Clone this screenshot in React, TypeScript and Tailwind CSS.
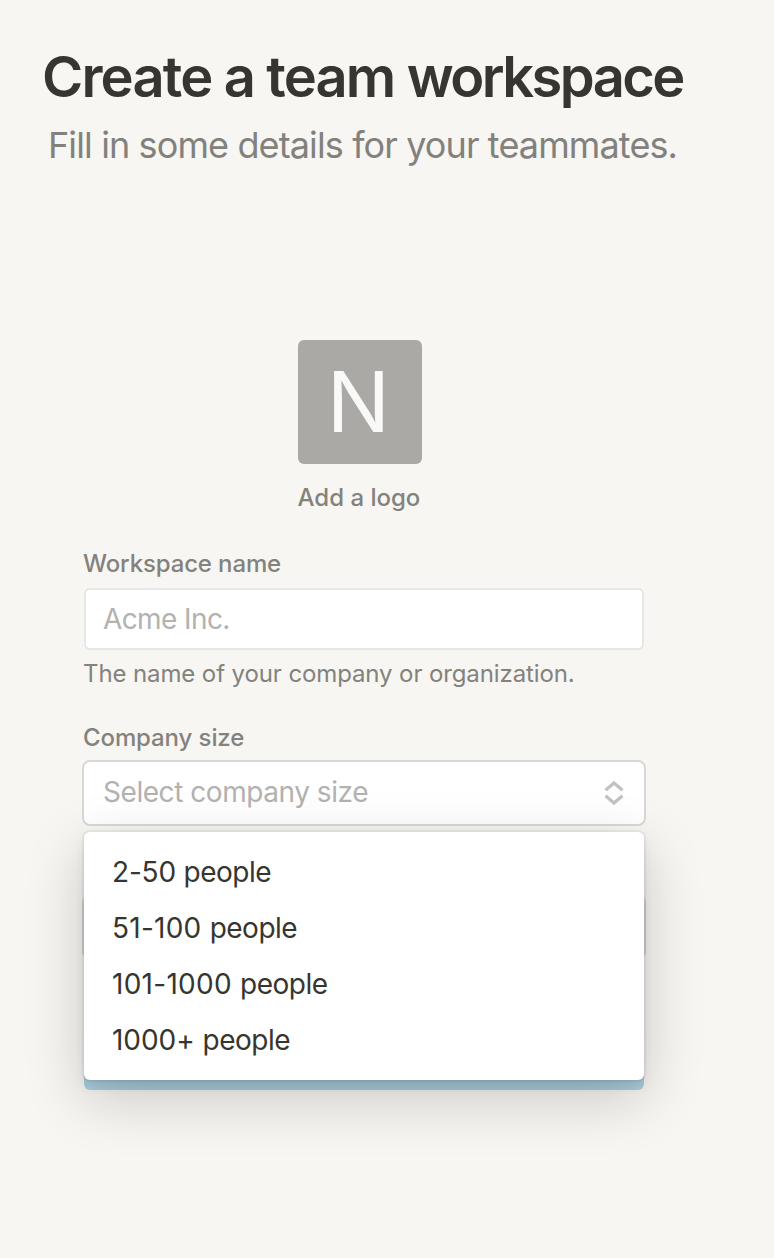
const sizes = [
  { count: "2-50", cls: "tracking-[-0.2px]" },
  { count: "51-100", cls: "tracking-[0.25px]" },
  { count: "101-1000", cls: "tracking-[0.27px]" },
  { count: "1000+", cls: "tracking-[-0.05px]" },
];

export default function App() {
  return (
    <main className="h-[1258px] w-[774px] overflow-hidden bg-[#f7f6f2] font-['Inter',sans-serif] text-[#37352f]">
      <header className="w-[726px] pt-[44px] whitespace-nowrap">
        <h1 className="ml-[42px] h-[66px] text-[56px] leading-[66px] font-semibold tracking-[-1.83px]">
          Create a team <span className="tracking-[-2.6px]">workspace</span>
        </h1>
        <p className="mt-[11px] ml-[48px] h-[49px] text-[36px] leading-[48px] tracking-[-0.88px] text-[#82817d]">Fill in some details for your teammates.</p>
      </header>
      <section className="mt-[170px] ml-[84px] flex w-[560px] flex-col whitespace-nowrap text-[#83827d]">
        <div className="ml-[214px] flex size-[124px] items-center justify-center rounded-[6px] bg-[#aaa9a5] pr-[3px] text-[84px] leading-none text-[#f9f9f8]">N</div>
        <div className="mt-[18px] ml-[213.5px] h-8 text-[24px] leading-8 font-medium">Add a logo</div>
        <label className="mt-[34px] -ml-px h-8 text-[24px] leading-8 font-medium tracking-[-0.13px]">Workspace name</label>
        <div className="mt-[8px] flex h-[62px] items-center rounded-[6px] border-2 border-[#e7e7e6] bg-white px-[17px] pb-px text-[28px] tracking-[-0.6px] text-[#b2b2b0]">Acme Inc.</div>
        <p className="mt-[8px] -ml-px h-8 text-[24px] leading-8 tracking-[-0.11px]">The name of your company or organization.</p>
        <label className="mt-[32px] -ml-px h-8 text-[24px] leading-8 font-medium tracking-[-0.1px]">Company size</label>
        <div className="relative mt-[6px] -ml-[2px] flex h-[66px] w-[564px] items-center justify-between rounded-[8px] border-2 border-[#d8d8d5] bg-white px-[19px] text-[28px] text-[#b2b2b0]">
          <span className="pb-[2px] tracking-[-0.45px]">Select company size</span>
          <svg className="mr-px h-[24px] w-[20px]" viewBox="0 0 20 24" fill="none" stroke="#c3c2c0" strokeWidth="3.3">
            <path d="M1.5 9.2 10 2l8.5 7.2M1.5 14.8 10 22l8.5-7.2" />
          </svg>
          <ul className="absolute top-[70px] left-0 h-[248px] w-[560px] rounded-[6px] bg-white pt-[12px] text-[#37352f] shadow-[0_0_0_2px_rgba(15,15,15,0.05),0_6px_12px_rgba(15,15,15,0.08),0_18px_60px_rgba(15,15,15,0.2)]">
            {sizes.map((s) => (
              <li key={s.count} className="h-14 px-7 text-[28px] leading-[57px]">
                <span className={s.cls}>{s.count} </span>
                <span className="tracking-[-0.5px]">people</span>
              </li>
            ))}
          </ul>
        </div>
        <div className="mt-[70px] -ml-[2px] h-[62px] w-[564px] rounded-[6px] border-2 border-[#d8d8d5]" />
        <div className="mt-[70px] h-[62px] rounded-[6px] bg-[#add0e1]" />
      </section>
    </main>
  );
}
